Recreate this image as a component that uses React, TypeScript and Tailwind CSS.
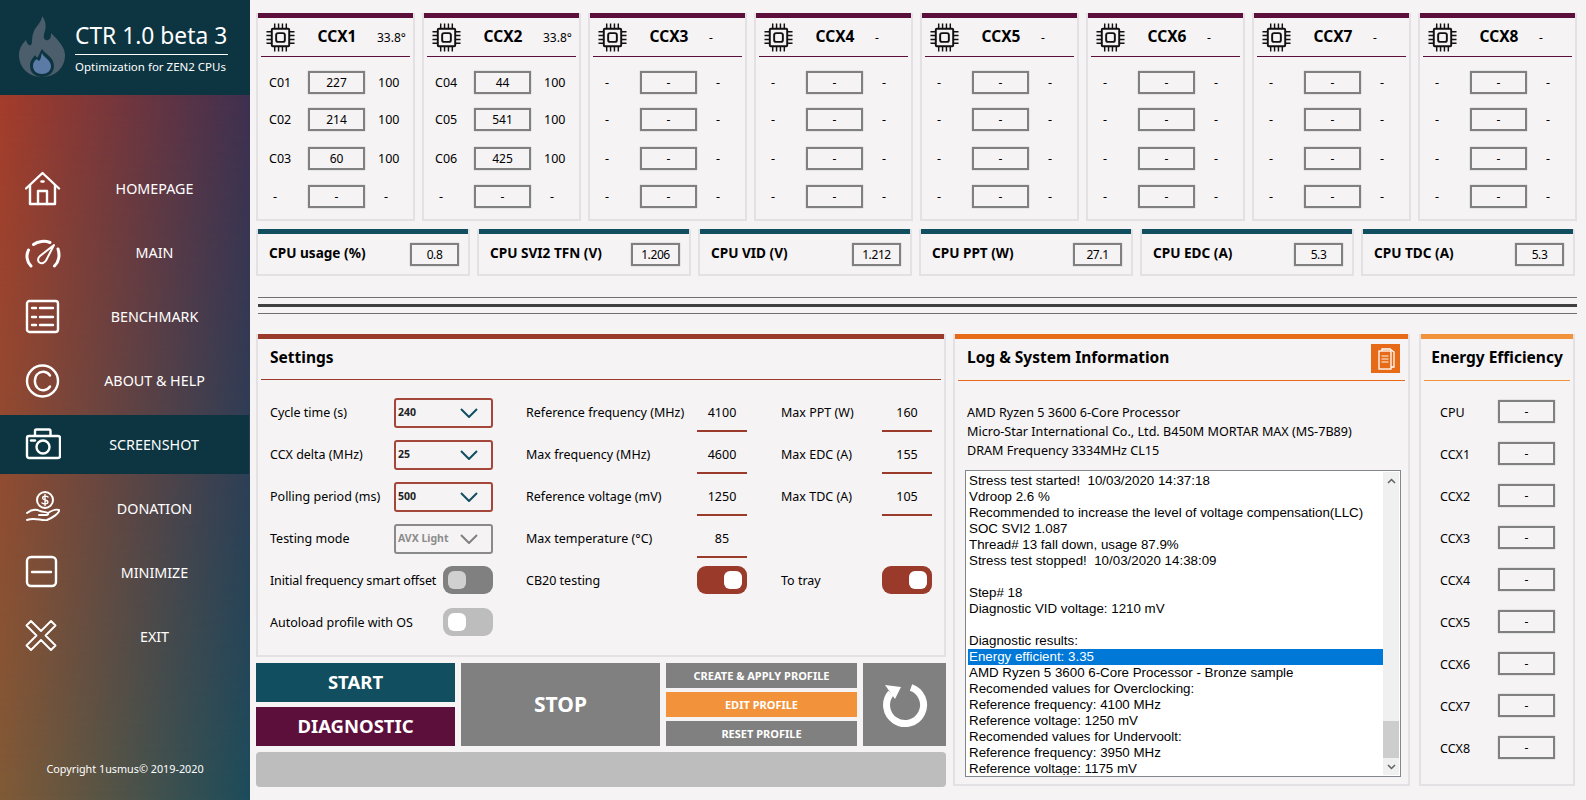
import type { ReactNode } from "react";

const font = "font-['Noto_Sans',sans-serif]";

const navItems = [
  { label: "HOMEPAGE", icon: "home" },
  { label: "MAIN", icon: "gauge" },
  { label: "BENCHMARK", icon: "list" },
  { label: "ABOUT & HELP", icon: "copyright" },
  { label: "SCREENSHOT", icon: "camera", active: true },
  { label: "DONATION", icon: "donate" },
  { label: "MINIMIZE", icon: "minimize" },
  { label: "EXIT", icon: "exit" },
];

const ccxData = [
  { name: "CCX1", temp: "33.8°", rows: [["C01", "227", "100"], ["C02", "214", "100"], ["C03", "60", "100"], ["-", "-", "-"]] },
  { name: "CCX2", temp: "33.8°", rows: [["C04", "44", "100"], ["C05", "541", "100"], ["C06", "425", "100"], ["-", "-", "-"]] },
  ...["CCX3", "CCX4", "CCX5", "CCX6", "CCX7", "CCX8"].map((name) => ({
    name,
    temp: "-",
    rows: [["-", "-", "-"], ["-", "-", "-"], ["-", "-", "-"], ["-", "-", "-"]],
  })),
];

// the core rows in the original are not evenly spaced
const ccxRowGap = ["", "mt-[14px]", "mt-[16px]", "mt-[15px]"];

const metrics = [
  ["CPU usage (%)", "0.8"],
  ["CPU SVI2 TFN (V)", "1.206"],
  ["CPU VID (V)", "1.212"],
  ["CPU PPT (W)", "27.1"],
  ["CPU EDC (A)", "5.3"],
  ["CPU TDC (A)", "5.3"],
];

const logLines = [
  "Stress test started!  10/03/2020 14:37:18",
  "Vdroop 2.6 %",
  "Recommended to increase the level of voltage compensation(LLC)",
  "SOC SVI2 1.087",
  "Thread# 13 fall down, usage 87.9%",
  "Stress test stopped!  10/03/2020 14:38:09",
  "",
  "Step# 18",
  "Diagnostic VID voltage: 1210 mV",
  "",
  "Diagnostic results:",
  "Energy efficient: 3.35",
  "AMD Ryzen 5 3600 6-Core Processor - Bronze sample",
  "Recomended values for Overclocking:",
  "Reference frequency: 4100 MHz",
  "Reference voltage: 1250 mV",
  "Recomended values for Undervoolt:",
  "Reference frequency: 3950 MHz",
  "Reference voltage: 1175 mV",
];

function NavIcon({ name }: { name: string }) {
  const common = { fill: "none", stroke: "white", strokeWidth: 2.4, strokeLinecap: "round" as const, strokeLinejoin: "round" as const };
  return (
    <svg width="36" height="36" viewBox="0 0 36 36" {...common}>
      {name === "home" && (
        <>
          <path d="M1 17.500 17.500 2 34 17.500" />
          <path d="M5 14.500V33H30V14.500" />
          <path d="M13 33V20H22V33" />
          <path d="M16.500 10.500H18.500" />
        </>
      )}
      {name === "gauge" && (
        <>
          <path d="M6 31C1.500 26.500 1 20 3.500 15" strokeWidth="3" />
          <path d="M8.500 9.500C13 6 20 5.500 25 7.500" strokeWidth="3" />
          <path d="M29.500 31C34 27 35 20 33 14" strokeWidth="3" />
          <path d="M14.500 27.500C12.500 26 12.500 23 15 21L29 10L21 25.500C19.500 28 16.500 29 14.500 27.500Z" strokeWidth="2" />
        </>
      )}
      {name === "list" && (
        <>
          <rect x="2" y="2" width="31" height="31" rx="2.500" />
          <path d="M7 9H11M15 9H28M7 18H11M15 18H28M7 26H11M15 26H28" />
        </>
      )}
      {name === "copyright" && (
        <>
          <circle cx="17.500" cy="18" r="15.500" />
          <path d="M25 12.500C22 8 16 7.500 12.500 11C9 14.500 9 21.500 12.500 25C16 28.500 22 28 25 23.500" />
        </>
      )}
      {name === "camera" && (
        <>
          <rect x="2" y="9" width="33" height="22" rx="2" />
          <path d="M10 8.500V4C10 3 10.500 2.500 11.500 2.500H24C25 2.500 25.500 3 25.500 4V8.500" />
          <circle cx="18" cy="20" r="6.500" />
          <path d="M6 13.500H10" />
        </>
      )}
      {name === "donate" && (
        <>
          <circle cx="20" cy="9" r="8" strokeWidth="2" />
          <path d="M23 6C21.500 4.500 17.500 5 17.500 7C17.500 9.500 23 8.500 23 11C23 13 19 13.500 17 12M20 3.500V14.500" strokeWidth="1.400" />
          <path d="M2 22C7 18 11 18 15 20C18 21 21 21 23 22C26 20 31 18 34 19C35 22 27 27 22 29C16 30 10 26 2 29" strokeWidth="1.900" />
          <path d="M14 24H22C23 24 23.500 23 23 22" strokeWidth="1.900" />
        </>
      )}
      {name === "minimize" && (
        <>
          <rect x="2" y="2" width="29" height="29" rx="4" />
          <path d="M7 17H26" />
        </>
      )}
      {name === "exit" && (
        <path d="M6 2 16 12 26 2 30.500 6.500 20.500 16.500 30.500 26.500 26 31 16 21 6 31 1.500 26.500 11.500 16.500 1.500 6.500Z" strokeWidth="1.900" />
      )}
    </svg>
  );
}

function ChipIcon() {
  return (
    <svg width="29" height="29" viewBox="0 0 30 30" fill="none" stroke="#111" strokeWidth="1.500">
      <rect x="6" y="6" width="18" height="18" rx="1" strokeWidth="2" />
      <rect x="10.500" y="10.500" width="9" height="9" rx="2" strokeWidth="2" />
      <path d="M9 0.500V6M13 0.500V6M17 0.500V6M21 0.500V6M9 24V29.500M13 24V29.500M17 24V29.500M21 24V29.500M0.500 9H6M0.500 13H6M0.500 17H6M0.500 21H6M24 9H29.500M24 13H29.500M24 17H29.500M24 21H29.500" />
    </svg>
  );
}

function Panel({ bar, className, children }: { bar: string; className: string; children: ReactNode }) {
  return (
    <div className={`flex flex-col border-2 border-t-0 border-[#e3e1e3] ${className}`}>
      <div className={`h-[5px] shrink-0 ${bar}`} />
      {children}
    </div>
  );
}

function ValueBox({ value, className }: { value: string; className: string }) {
  return (
    <div className={`flex h-[23px] items-center justify-center border-2 border-[#808080] pt-px text-[12px] text-black shadow-[0_0_1px_#9a9a9a] ${className}`}>
      {value}
    </div>
  );
}

function CcxCard({ name, temp, rows }: { name: string; temp: string; rows: string[][] }) {
  return (
    <Panel bar="bg-[#5d0f3c]" className="h-[208px] w-[159px]">
      <div className="mx-[3px] flex h-[39px] items-center border-b border-[#5d0f3c] pl-[5px]">
        <ChipIcon />
        <span className="w-[82px] pl-[2px] text-center text-[15.5px] font-bold text-black">{name}</span>
        <span className="pt-[2px] text-[12px] text-black">{temp}</span>
      </div>
      <div className="flex flex-col pt-[14px]">
        {rows.map((row, i) => (
          <div key={i} className={`flex h-[23px] items-center text-[12.5px] text-black ${ccxRowGap[i]}`}>
            <span className={`w-[50px] pt-px ${row[0] === "-" ? "pl-[15px]" : "pl-[11px]"}`}>{row[0]}</span>
            <ValueBox value={row[1]} className="w-[57px]" />
            <span className={`pt-px ${row[2] === "-" ? "pl-[19px]" : "pl-[13px]"}`}>{row[2]}</span>
          </div>
        ))}
      </div>
    </Panel>
  );
}

function SelectBox({ value, disabled }: { value: string; disabled?: boolean }) {
  return (
    <div
      className={`flex h-[30px] w-[99px] items-center justify-between rounded-[3px] border-2 pl-[2px] pr-[13px] text-[10.5px] font-bold ${
        disabled ? "border-[#8a8a8a] text-[#8c8c8c]" : "border-[#a4473a] text-[#222]"
      }`}
    >
      <span className="pb-px">{value}</span>
      <svg width="18" height="10" viewBox="0 0 18 10" fill="none" stroke={disabled ? "#808080" : "#114e5f"} strokeWidth="2">
        <path d="M1 1 9 9 17 1" />
      </svg>
    </div>
  );
}

function Toggle({ kind }: { kind: "on" | "dark" | "light" }) {
  const track = kind === "on" ? "bg-[#9a3a2b] justify-end" : kind === "dark" ? "bg-[#808080]" : "bg-[#bdbdbd]";
  const knob = kind === "dark" ? "bg-[#d0d0d0]" : "bg-white";
  return (
    <div className={`flex h-[28px] w-[50px] items-center rounded-[9px] px-[5px] ${track}`}>
      <div className={`h-[18px] w-[18px] rounded-[6px] ${knob}`} />
    </div>
  );
}

function Underlined({ value }: { value: string }) {
  return (
    <div className="flex h-[34px] w-[50px] items-center justify-center border-b-2 border-[#9a3a2b] pb-[2px] text-[12.5px]">
      {value}
    </div>
  );
}

function SettingRow({ label, tight, children }: { label: string; tight?: boolean; children?: ReactNode }) {
  return (
    <div className="flex h-[30px] items-start justify-between text-[12.5px] text-black">
      <span className={`leading-[30px] whitespace-nowrap ${tight ? "tracking-[-0.12px]" : ""}`}>{label}</span>
      {children}
    </div>
  );
}

function Sidebar() {
  return (
    <aside className="relative flex h-full w-[250px] shrink-0 flex-col bg-[linear-gradient(to_right,#a53c2b,#3f3050)] text-white">
      <div className="absolute inset-0 bg-[linear-gradient(to_right,#805a36,#1c4c5b)] [mask-image:linear-gradient(to_bottom,transparent_95px,black)]" />
      <div className="relative flex h-[95px] items-center bg-[#0c3541] pl-[18px]">
        <svg width="48" height="62" viewBox="0 0 48 62" className="mb-[2px]">
          <path
            d="M24 0C29 6 28 13 26 18C25 22 27 25 30 24C33 23 33 20 33 17C40 24 47 31 47 39C47 52 37 61 24 61C11 61 1 52 1 39C1 32 5 27 8 24C9 28 11 30 13 29C15 27 13 22 16 15C18 10 24 6 24 0Z"
            fill="#4c5e6c"
          />
          <path d="M24 33C27 38 36 41 36 50C36 57 30 61 24 61C18 61 12 57 12 50C12 44 15 42 17 39C18 41 19 42 20 41C21 39 22 36 24 33Z" fill="#0c3541" />
          <path d="M24 37C25 41 33 44 33 50C33 55 29 58 24 58C19 58 15 55 15 50C15 46 17 44 19 43C20 45 21 45 22 44C23 42 23 40 24 37Z" fill="#5c7aa6" />
        </svg>
        <div className="ml-[9px] w-[153px]">
          <div className="border-b border-white pb-[3px] text-[22.8px] leading-[30px] whitespace-nowrap">CTR 1.0 beta 3</div>
          <div className="pt-[4px] text-[11.5px] leading-[16px] whitespace-nowrap">Optimization for ZEN2 CPUs</div>
        </div>
      </div>
      <nav className="relative mt-[64px] flex flex-col gap-[5px]">
        {navItems.map((item) => (
          <div key={item.label} className={`flex h-[59px] items-center pl-[25px] ${item.active ? "mr-[1px] bg-[#0c3541]" : ""}`}>
            <NavIcon name={item.icon} />
            <span className="flex-1 pr-[2px] text-center text-[14.3px]">{item.label}</span>
          </div>
        ))}
      </nav>
      <div className="relative mt-auto pb-[23px] text-center text-[10.8px] leading-[16px]">Copyright 1usmus© 2019-2020</div>
    </aside>
  );
}

function LogPanel() {
  return (
    <Panel bar="bg-[#e66a17]" className="h-[452px] w-[457px]">
      <div className="mx-[3px] flex h-[42px] items-center justify-between border-b border-[#e66a17] pl-[9px] pr-[5px]">
        <span className="pb-[3px] text-[15.5px] font-bold text-black">Log &amp; System Information</span>
        <div className="mb-[2px] flex h-[29px] w-[29px] items-center justify-center bg-[#e66a17]">
          <svg width="18" height="22" viewBox="0 0 18 22" fill="none" stroke="white" strokeWidth="1.300">
            <path d="M5 3V1H13L17 4V19H14" />
            <rect x="2" y="3" width="12" height="18" />
            <path d="M4.500 8H11.500M4.500 11H11.500M4.500 14H11.500" stroke="#f6c7a5" strokeWidth="1.500" />
          </svg>
        </div>
      </div>
      <div className="flex flex-col pl-[12px] pt-[22px] text-[12.6px] leading-[19px] text-black">
        <div>AMD Ryzen 5 3600 6-Core Processor</div>
        <div>Micro-Star International Co., Ltd. B450M MORTAR MAX (MS-7B89)</div>
        <div>DRAM Frequency 3334MHz CL15</div>
      </div>
      <div className="ml-[10px] mt-[10px] flex h-[307px] w-[436px] border border-[#82878f] bg-white p-[1px] font-['Liberation_Sans',sans-serif] text-[13.33px] leading-[16px] text-black">
        <div className="flex-1 overflow-hidden pl-[1px] pt-[1px]">
          {logLines.map((line, i) => (
            <div key={i} className={`h-[16px] whitespace-pre pl-[1px] ${i === 11 ? "bg-[#0078d7] text-white" : ""}`}>
              {line}
            </div>
          ))}
        </div>
        <div className="flex w-[16px] shrink-0 flex-col bg-[#f0f0f0]">
          <div className="flex h-[17px] items-center justify-center">
            <svg width="9" height="6" viewBox="0 0 9 6" fill="none" stroke="#606060" strokeWidth="1.500"><path d="M1 5 4.500 1.500 8 5" /></svg>
          </div>
          <div className="mt-auto h-[37px] bg-[#cdcdcd]" />
          <div className="flex h-[17px] items-center justify-center">
            <svg width="9" height="6" viewBox="0 0 9 6" fill="none" stroke="#606060" strokeWidth="1.500"><path d="M1 1 4.500 4.500 8 1" /></svg>
          </div>
        </div>
      </div>
    </Panel>
  );
}

function EnergyPanel() {
  const rows = ["CPU", "CCX1", "CCX2", "CCX3", "CCX4", "CCX5", "CCX6", "CCX7", "CCX8"];
  return (
    <Panel bar="bg-[#f2923a]" className="h-[452px] w-[156px]">
      <div className="mx-[3px] flex h-[42px] items-center justify-center border-b border-[#f2923a] pb-[3px] text-[15.5px] font-bold whitespace-nowrap text-black">
        Energy Efficiency
      </div>
      <div className="flex flex-col gap-[19px] pt-[19px] pl-[19px] pr-[18px]">
        {rows.map((row) => (
          <div key={row} className="flex items-center justify-between text-[12.5px] text-black">
            <span className="pt-[3px]">{row}</span>
            <ValueBox value="-" className="w-[57px]" />
          </div>
        ))}
      </div>
    </Panel>
  );
}

export default function App() {
  return (
    <div className={`flex h-[800px] w-[1586px] overflow-hidden bg-[#f5f3f4] ${font}`}>
      <Sidebar />
      <main className="flex min-w-0 flex-1 flex-col pl-[6px] pt-[13px]">
        <div className="flex gap-[7px]">
          {ccxData.map((ccx) => (
            <CcxCard key={ccx.name} {...ccx} />
          ))}
        </div>
        <div className="mt-[8px] flex gap-[7px]">
          {metrics.map(([label, value]) => (
            <Panel key={label} bar="bg-[#114e5f]" className="h-[47px] w-[214px]">
              <div className="flex flex-1 items-center justify-between pl-[11px] pr-[9px]">
                <span className="pb-[2px] text-[13.6px] font-bold text-black">{label}</span>
                <ValueBox value={value} className="w-[49px] tracking-[-0.4px]" />
              </div>
            </Panel>
          ))}
        </div>
        <div className="ml-[2px] mr-[9px] mt-[21px] flex flex-col gap-[6px]">
          <div className="h-px bg-[#707070]" />
          <div className="h-[3px] bg-[#404040]" />
          <div className="h-px bg-[#707070]" />
        </div>
        <div className="mt-[20px] flex items-start">
          <div className="flex flex-col">
            <Panel bar="bg-[#9a3a2b]" className="h-[323px] w-[690px]">
              <div className="mx-[3px] flex h-[41px] items-center border-b border-[#9a3a2b] pb-[2px] pl-[9px] text-[15.5px] font-bold text-black">
                Settings
              </div>
              <div className="grid grid-cols-[223px_254px_185px] pl-[12px] pt-[18px]">
                <div className="flex flex-col gap-[12px]">
                  <SettingRow label="Cycle time (s)"><SelectBox value="240" /></SettingRow>
                  <SettingRow label="CCX delta (MHz)"><SelectBox value="25" /></SettingRow>
                  <SettingRow label="Polling period (ms)"><SelectBox value="500" /></SettingRow>
                  <SettingRow label="Testing mode"><SelectBox value="AVX Light" disabled /></SettingRow>
                  <SettingRow label="Initial frequency smart offset" tight><Toggle kind="dark" /></SettingRow>
                  <SettingRow label="Autoload profile with OS"><Toggle kind="light" /></SettingRow>
                </div>
                <div className="ml-[33px] flex flex-col gap-[12px]">
                  <SettingRow label="Reference frequency (MHz)"><Underlined value="4100" /></SettingRow>
                  <SettingRow label="Max frequency (MHz)"><Underlined value="4600" /></SettingRow>
                  <SettingRow label="Reference voltage (mV)"><Underlined value="1250" /></SettingRow>
                  <SettingRow label="Max temperature (°C)"><Underlined value="85" /></SettingRow>
                  <SettingRow label="CB20 testing"><Toggle kind="on" /></SettingRow>
                </div>
                <div className="ml-[34px] flex flex-col gap-[12px]">
                  <SettingRow label="Max PPT (W)"><Underlined value="160" /></SettingRow>
                  <SettingRow label="Max EDC (A)"><Underlined value="155" /></SettingRow>
                  <SettingRow label="Max TDC (A)"><Underlined value="105" /></SettingRow>
                  <div className="h-[30px]" />
                  <SettingRow label="To tray"><Toggle kind="on" /></SettingRow>
                </div>
              </div>
            </Panel>
            <div className="mt-[6px] flex h-[83px] gap-[6px] font-bold text-white">
              <div className="flex w-[199px] flex-col gap-[5px] text-[18.5px]">
                <div className="flex flex-1 items-center justify-center bg-[#114e5f] pb-[2px]">START</div>
                <div className="flex flex-1 items-center justify-center bg-[#5d0f3c] pb-[2px]">DIAGNOSTIC</div>
              </div>
              <div className="flex w-[199px] items-center justify-center bg-[#808080] text-[21px]">STOP</div>
              <div className="flex w-[191px] flex-col gap-[4px] text-[11px]">
                <div className="flex flex-1 items-center justify-center bg-[#808080] pt-[2px]">CREATE &amp; APPLY PROFILE</div>
                <div className="flex flex-1 items-center justify-center bg-[#f2923a] pt-[2px]">EDIT PROFILE</div>
                <div className="flex flex-1 items-center justify-center bg-[#808080] pt-[2px]">RESET PROFILE</div>
              </div>
              <div className="flex w-[83px] items-center justify-center bg-[#808080]">
                <svg width="48" height="46" viewBox="0 0 48 46" fill="none">
                  <path d="M30 5.500A18.500 18.500 0 1 1 10 11" stroke="white" strokeWidth="7" />
                  <path d="M4 3 20 5 14 17Z" fill="white" />
                </svg>
              </div>
            </div>
            <div className="mt-[6px] h-[35px] rounded-[4px] bg-[#bdbdbd]" />
          </div>
          <div className="ml-[7px]"><LogPanel /></div>
          <div className="ml-[9px]"><EnergyPanel /></div>
        </div>
      </main>
    </div>
  );
}
